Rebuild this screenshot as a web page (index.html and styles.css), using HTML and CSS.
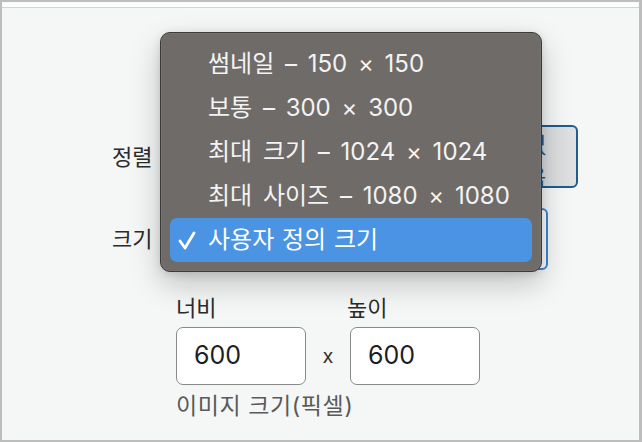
FILE: index.html
```html
<!DOCTYPE html>
<html lang="ko">
<head>
<meta charset="utf-8">
<title>이미지 크기</title>
<link rel="stylesheet" href="styles.css">
</head>
<body>
<div class="frame">
  <div class="topbar"></div>
  <div class="content">
    <div class="form">
      <div class="row row-align">
        <span class="label">정렬</span>
        <div class="btn-group">
          <button class="btn">왼쪽</button>
          <button class="btn">가운데</button>
          <button class="btn">오른쪽</button>
          <button class="btn btn-active">없음</button>
        </div>
      </div>
      <div class="row row-size">
        <span class="label">크기</span>
        <div class="select">사용자 정의 크기</div>
      </div>
      <div class="row row-dims">
        <span></span>
        <div class="dims-block">
          <div class="dims">
            <div class="dim">
              <span class="dim-label">너비</span>
              <div class="input">600</div>
            </div>
            <span class="times">x</span>
            <div class="dim">
              <span class="dim-label">높이</span>
              <div class="input">600</div>
            </div>
          </div>
          <p class="help">이미지 크기(픽셀)</p>
        </div>
      </div>
    </div>

    <div class="menu">
      <div class="item">썸네일 – 150 × 150</div>
      <div class="item">보통 – 300 × 300</div>
      <div class="item">최대 크기 – 1024 × 1024</div>
      <div class="item">최대 사이즈 – 1080 × 1080</div>
      <div class="item item-selected">
        <svg class="check" width="18" height="19" viewBox="0 0 18 19"><polyline points="2,10 7,17 16,2" fill="none" stroke="#ffffff" stroke-width="2.8" stroke-linecap="round" stroke-linejoin="round"/></svg>
        사용자 정의 크기
      </div>
    </div>
  </div>
</div>
</body>
</html>
```

FILE: styles.css
```css
* { box-sizing: border-box; }
html, body { margin: 0; padding: 0; }
body {
  width: 642px;
  height: 442px;
  overflow: hidden;
  font-family: Inter, "Noto Sans CJK KR", sans-serif;
  background: #f5f7f7;
}
.frame {
  width: 642px;
  height: 442px;
  border: 2px solid #bdbdbd;
  border-right-width: 3px;
  display: flex;
  flex-direction: column;
  background: #f5f7f7;
}
.topbar {
  height: 6px;
  background: #fcfcfc;
  border-bottom: 1px solid #d3d3d3;
  flex: none;
}
.content {
  position: relative;
  flex: 1;
}
.form {
  padding-left: 110px;
  display: flex;
  flex-direction: column;
}
.row {
  display: grid;
  grid-template-columns: 64px auto;
  align-items: center;
}
.label {
  font-size: 22px;
  color: #2b2b2b;
  line-height: 28px;
}
.row-align { margin-top: 117px; }
.row-size { margin-top: 20px; }
.row-dims { margin-top: 24px; align-items: start; }

.btn-group {
  width: 402px;
  height: 63px;
  display: flex;
  justify-content: flex-end;
  gap: 8px;
}
.btn {
  height: 63px;
  font-family: inherit;
  font-size: 22px;
  color: #1d5a8e;
  background: linear-gradient(90deg, #d3d4d6, #dfe0e2);
  border: 2px solid #1f5c8f;
  border-radius: 6px;
  padding: 0 26px 0 30px;
}
.select {
  width: 372px;
  height: 62px;
  border: 2px solid #3b86d6;
  border-radius: 6px;
  background: #ffffff;
  font-size: 22px;
  line-height: 58px;
  padding-left: 16px;
  color: #222;
}

.dims { display: flex; align-items: flex-end; }
.dim { display: flex; flex-direction: column; }
.dim-label {
  font-size: 22px;
  line-height: 28px;
  color: #2b2b2b;
  margin-bottom: 5px;
}
.dim:last-child .dim-label { margin-left: -3px; }
.input {
  width: 130px;
  height: 58px;
  background: #ffffff;
  border: 1.5px solid #8a8a8a;
  border-radius: 7px;
  font-size: 25px;
  line-height: 55px;
  padding-left: 17px;
  color: #1e1e1e;
}
.times {
  font-size: 20px;
  color: #333;
  width: 44px;
  text-align: center;
  line-height: 20px;
  margin-bottom: 19px;
}
.help {
  margin: 7px 0 0;
  font-size: 23px;
  line-height: 28px;
  letter-spacing: 0.6px;
  color: #5a5a5a;
}

.menu {
  position: absolute;
  left: 158px;
  top: 24px;
  width: 382px;
  height: 240px;
  padding: 9px;
  background: #6f6b69;
  border: 1px solid #3a3938;
  border-radius: 10px;
  box-shadow: 0 12px 30px rgba(0, 0, 0, 0.22), 0 2px 8px rgba(0, 0, 0, 0.12), inset 0 0 0 1px rgba(255, 255, 255, 0.06);
}
.item {
  position: relative;
  height: 44px;
  line-height: 44px;
  padding-left: 38px;
  font-size: 24px;
  word-spacing: 4px;
  color: #f3f3f3;
  border-radius: 7px;
  white-space: nowrap;
}
.item-selected {
  background: #4a94e3;
  color: #ffffff;
  word-spacing: 1px;
}
.check {
  position: absolute;
  left: 8px;
  top: 13px;
}
```
